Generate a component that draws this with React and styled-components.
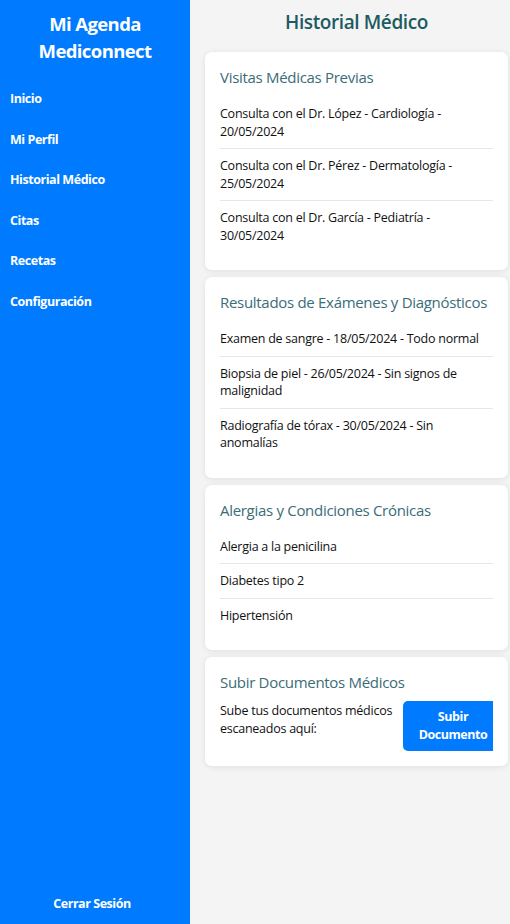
import React from 'react';
import styled, { createGlobalStyle } from 'styled-components';

const GlobalStyle = createGlobalStyle`
  html, body {
    margin: 0;
    padding: 0;
    height: 100%;
  }
  body {
    font-family: "Open Sans", "Liberation Sans", sans-serif;
    background: #f4f4f4;
  }
  #root {
    height: 100%;
  }
`;

const Layout = styled.div`
  display: flex;
  height: 924px;
`;

const Sidebar = styled.aside`
  width: 190px;
  flex: 0 0 190px;
  background: #007bff;
  color: #fff;
  display: flex;
  flex-direction: column;
  box-sizing: border-box;
  padding: 10px 0 0;
`;

const Brand = styled.h1`
  margin: 0 0 15px;
  text-align: center;
  font-size: 18.5px;
  line-height: 27px;
  letter-spacing: -0.6px;
  font-weight: 700;
`;

const Nav = styled.nav`
  display: flex;
  flex-direction: column;
`;

const NavLink = styled.a`
  display: block;
  padding: 0 10px;
  height: 40.6px;
  line-height: 40.6px;
  font-size: 12.5px;
  letter-spacing: -0.45px;
  font-weight: 700;
  color: #fff;
  text-decoration: none;
`;

const Logout = styled.a`
  margin-top: auto;
  text-align: center;
  font-size: 12.5px;
  letter-spacing: -0.45px;
  font-weight: 700;
  color: #fff;
  padding: 0 6px 12px 0;
`;

const Main = styled.main`
  flex: 1;
  padding: 0 2px 0 15px;
  display: flex;
  flex-direction: column;
`;

const Title = styled.h2`
  margin: 9px 0 17px;
  text-align: center;
  font-size: 19px;
  line-height: 26px;
  letter-spacing: -0.4px;
  font-weight: 600;
  color: #1b5b61;
`;

const Card = styled.section`
  background: #fff;
  border-radius: 7px;
  box-shadow: 0 1px 6px rgba(0, 0, 0, 0.09);
  padding: 14px 15px 15px;
  margin-bottom: 7px;
`;

const CardTitle = styled.h3`
  margin: 0 0 9px;
  font-size: 15px;
  line-height: 22px;
  letter-spacing: -0.3px;
  font-weight: 400;
  color: #3b6c78;
`;

const List = styled.ul`
  list-style: none;
  margin: 0;
  padding: 0 0 3px;
`;

const Item = styled.li`
  font-size: 12.5px;
  line-height: 17.5px;
  letter-spacing: -0.25px;
  color: #111;
  padding: 8px 0;
  border-bottom: 1px solid #e6e6e6;

  &:last-child {
    border-bottom: none;
  }
`;

const UploadRow = styled.div`
  display: flex;
  align-items: flex-start;
  justify-content: space-between;
  margin-top: -1px;
`;

const UploadText = styled.p`
  margin: 1px 0 0;
  font-size: 12.5px;
  line-height: 18px;
  letter-spacing: -0.25px;
  color: #111;
`;

const UploadButton = styled.button`
  flex: 0 0 90px;
  height: 50px;
  background: #007bff;
  color: #fff;
  border: none;
  border-radius: 5px 0 0 5px;
  font-family: inherit;
  font-size: 12.5px;
  letter-spacing: -0.45px;
  font-weight: 700;
  line-height: 18px;
  padding: 0 4px 0 14px;
`;

const visits = [
  'Consulta con el Dr. López - Cardiología - 20/05/2024',
  'Consulta con el Dr. Pérez - Dermatología - 25/05/2024',
  'Consulta con el Dr. García - Pediatría - 30/05/2024',
];

const results = [
  'Examen de sangre - 18/05/2024 - Todo normal',
  'Biopsia de piel - 26/05/2024 - Sin signos de malignidad',
  'Radiografía de tórax - 30/05/2024 - Sin anomalías',
];

const conditions = ['Alergia a la penicilina', 'Diabetes tipo 2', 'Hipertensión'];

const links = ['Inicio', 'Mi Perfil', 'Historial Médico', 'Citas', 'Recetas', 'Configuración'];

export default function App() {
  return (
    <>
      <GlobalStyle />
      <Layout>
        <Sidebar>
          <Brand>Mi Agenda<br />Mediconnect</Brand>
          <Nav>
            {links.map(l => <NavLink key={l}>{l}</NavLink>)}
          </Nav>
          <Logout>Cerrar Sesión</Logout>
        </Sidebar>
        <Main>
          <Title>Historial Médico</Title>
          <Card>
            <CardTitle>Visitas Médicas Previas</CardTitle>
            <List>{visits.map(v => <Item key={v}>{v}</Item>)}</List>
          </Card>
          <Card>
            <CardTitle>Resultados de Exámenes y Diagnósticos</CardTitle>
            <List>{results.map(v => <Item key={v}>{v}</Item>)}</List>
          </Card>
          <Card>
            <CardTitle>Alergias y Condiciones Crónicas</CardTitle>
            <List>{conditions.map(v => <Item key={v}>{v}</Item>)}</List>
          </Card>
          <Card>
            <CardTitle>Subir Documentos Médicos</CardTitle>
            <UploadRow>
              <UploadText>Sube tus documentos médicos escaneados aquí:</UploadText>
              <UploadButton>Subir Documento</UploadButton>
            </UploadRow>
          </Card>
        </Main>
      </Layout>
    </>
  );
}
